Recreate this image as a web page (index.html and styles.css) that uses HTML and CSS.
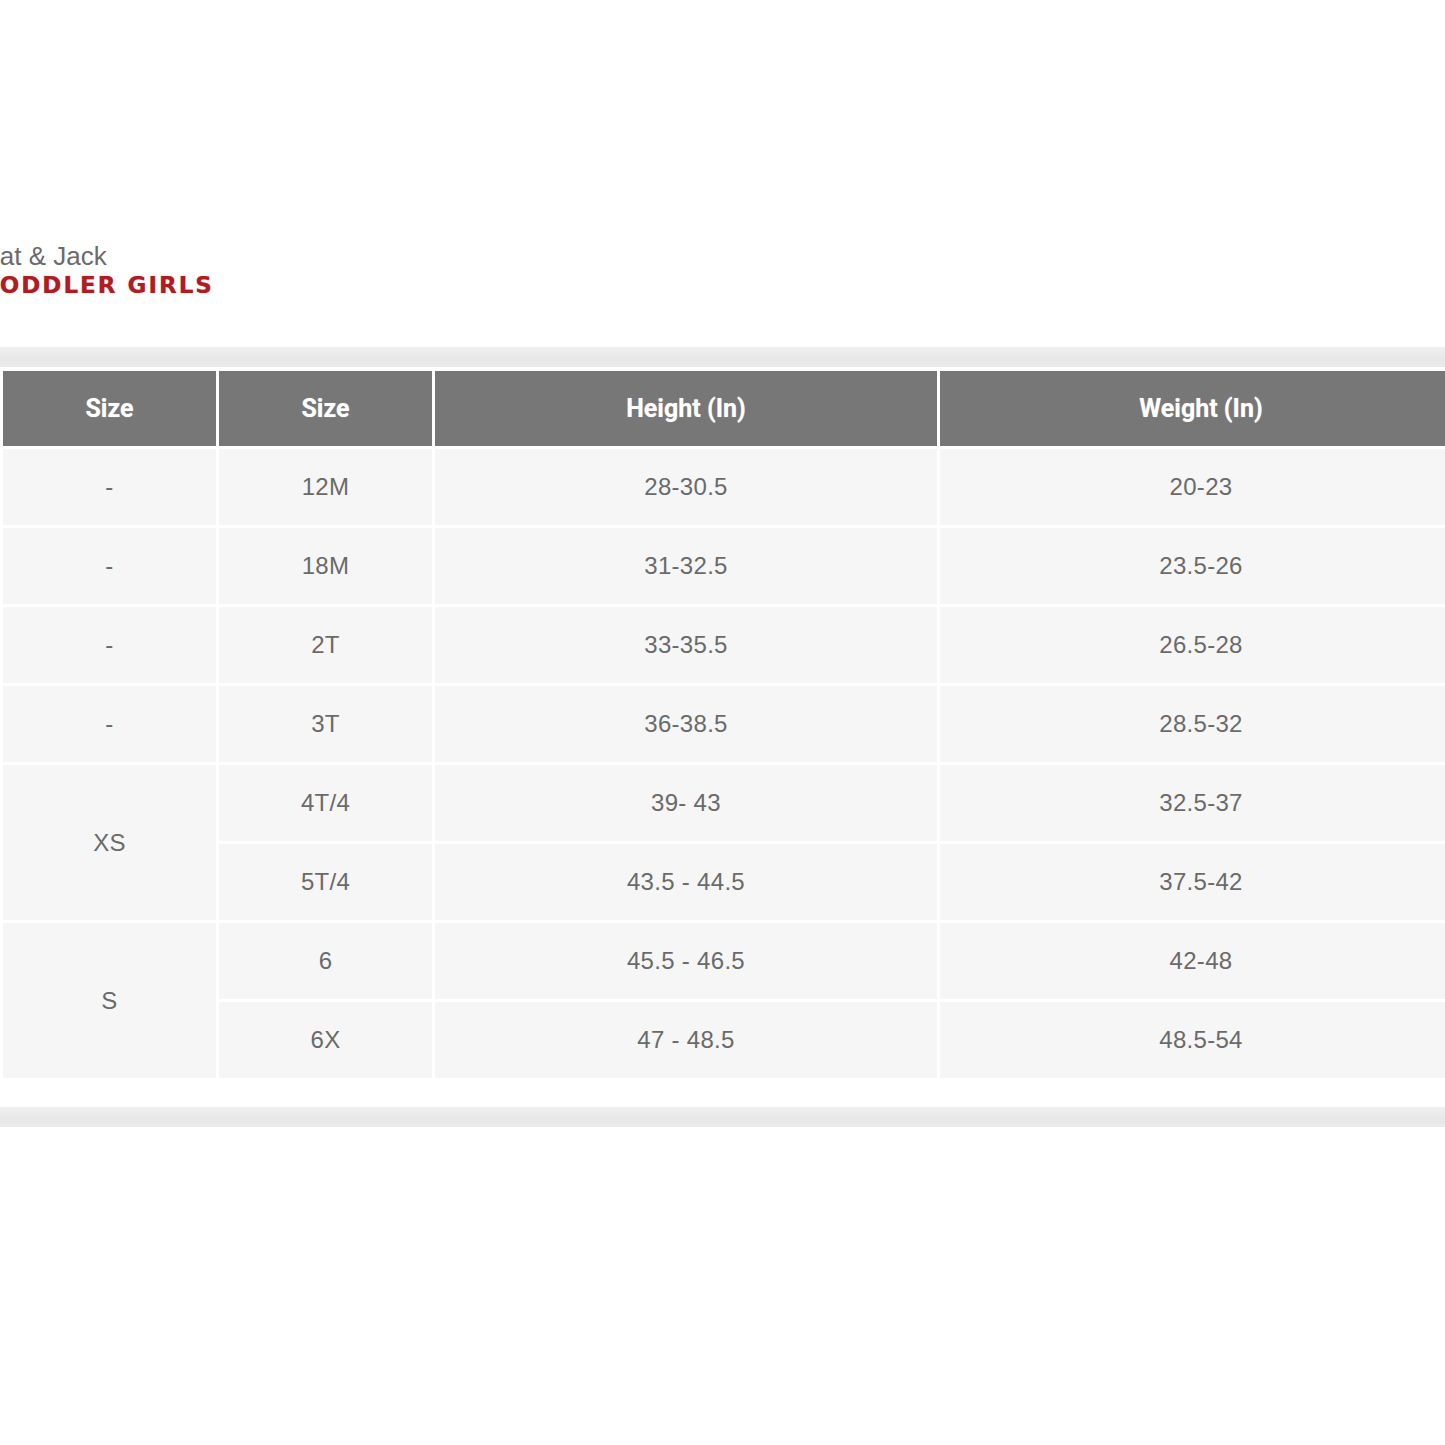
FILE: index.html
```html
<!DOCTYPE html>
<html>
<head>
<meta charset="utf-8">
<link rel="stylesheet" href="styles.css">
</head>
<body>
<div class="page">
  <div class="title">
    <div class="brand">Cat &amp; Jack</div>
    <div class="category">TODDLER GIRLS</div>
  </div>
  <div class="band"></div>
  <table class="chart">
    <colgroup>
      <col class="c1"><col class="c2"><col class="c3"><col class="c4">
    </colgroup>
    <thead>
      <tr><th>Size</th><th>Size</th><th>Height (In)</th><th>Weight (In)</th></tr>
    </thead>
    <tbody>
      <tr><td>-</td><td>12M</td><td>28-30.5</td><td>20-23</td></tr>
      <tr><td>-</td><td>18M</td><td>31-32.5</td><td>23.5-26</td></tr>
      <tr><td>-</td><td>2T</td><td>33-35.5</td><td>26.5-28</td></tr>
      <tr><td>-</td><td>3T</td><td>36-38.5</td><td>28.5-32</td></tr>
      <tr><td rowspan="2">XS</td><td>4T/4</td><td>39- 43</td><td>32.5-37</td></tr>
      <tr><td>5T/4</td><td>43.5 - 44.5</td><td>37.5-42</td></tr>
      <tr><td rowspan="2">S</td><td>6</td><td>45.5 - 46.5</td><td>42-48</td></tr>
      <tr><td>6X</td><td>47 - 48.5</td><td>48.5-54</td></tr>
    </tbody>
  </table>
  <div class="band band-bottom"></div>
</div>
</body>
</html>
```

FILE: styles.css
```css
html, body {
  margin: 0;
  padding: 0;
  background: #ffffff;
}
body {
  width: 1445px;
  height: 1445px;
  overflow: hidden;
}
.page {
  padding-top: 242px;
  width: 1445px;
  overflow: hidden;
}
.title {
  margin-left: -19px;
}
.brand {
  font-family: "Liberation Sans", Arial, sans-serif;
  font-size: 26px;
  line-height: 28px;
  color: #6b6b6b;
}
.category {
  margin-left: 1px;
  font-family: "DejaVu Sans", Verdana, sans-serif;
  font-weight: bold;
  font-size: 23px;
  line-height: 30px;
  letter-spacing: 2px;
  color: #b01c22;
  text-shadow: 0 0 1px rgba(150, 20, 25, 0.6);
}
.band {
  margin-top: 47px;
  height: 20px;
  width: 1445px;
  background: linear-gradient(#f0f0f0, #e8e8e8 60%, #ebebeb);
}
.band-bottom {
  margin-top: 26px;
}
.chart {
  margin-top: 1px;
  border-collapse: separate;
  border-spacing: 3px;
  table-layout: fixed;
  width: 1465px;
}
.c1 { width: 213px; }
.c2 { width: 213px; }
.c3 { width: 502px; }
.c4 { width: 522px; }
.chart th {
  height: 75px;
  padding: 0;
  background: #777777;
  color: #ffffff;
  font-family: Roboto, "Liberation Sans", sans-serif;
  font-weight: bold;
  font-size: 25px;
  text-align: center;
  vertical-align: middle;
  text-shadow: 0 0 1px rgba(255, 255, 255, 0.5);
}
.chart td {
  height: 76px;
  padding: 0;
  background: #f6f6f6;
  color: #6a6a6a;
  font-family: "Liberation Sans", Arial, sans-serif;
  font-size: 24px;
  letter-spacing: 0.3px;
  text-align: center;
  vertical-align: middle;
}
```
